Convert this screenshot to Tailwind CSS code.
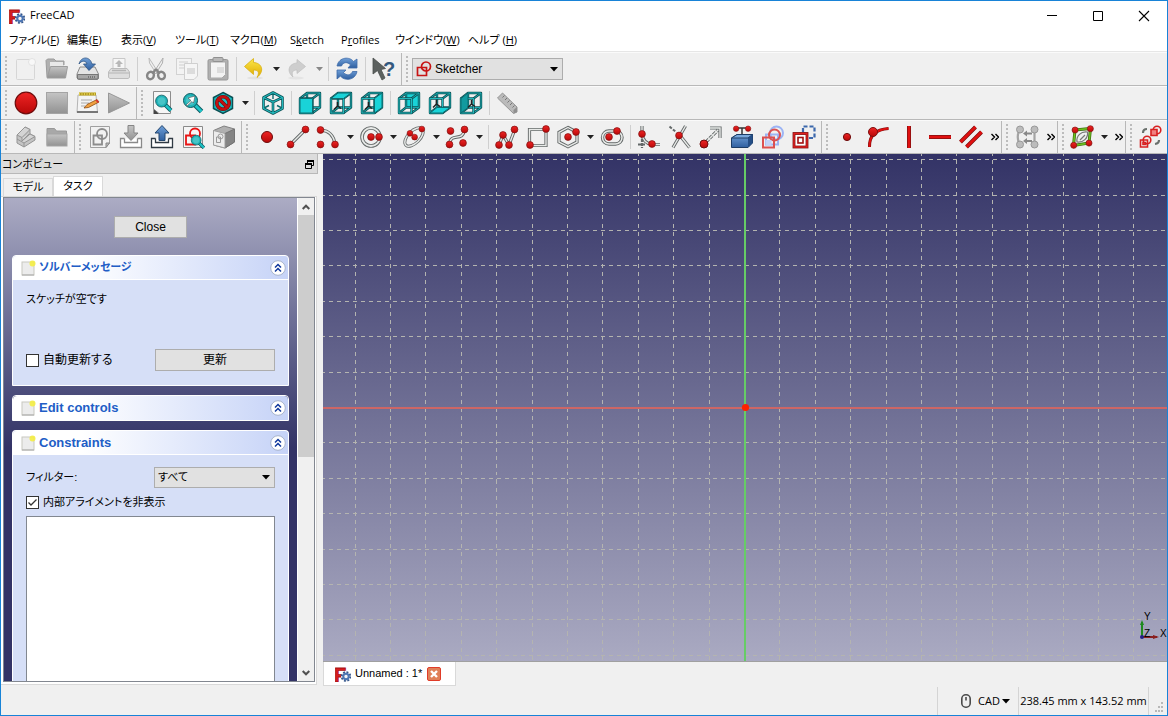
<!DOCTYPE html>
<html lang="ja">
<head>
  <meta charset="UTF-8" />
  <title>FreeCAD</title>
  <meta name="viewport" content="width=device-width, initial-scale=1.0" />
  <script src="https://cdn.jsdelivr.net/npm/@tailwindcss/browser@4"></script>
  <style>
    body {
      font-family: "Liberation Sans", "Noto Sans CJK JP", sans-serif;
      font-feature-settings: "palt";
    }
    .ui {
      font-family: "Open Sans", "Noto Sans CJK JP", sans-serif;
    }
  </style>
</head>
<body class="h-screen flex flex-col overflow-hidden bg-[#f0f0f0] border border-[#1883d7] text-xs text-black">

  <!-- shared icon parts -->
  <svg class="absolute w-0 h-0" aria-hidden="true">
    <defs>
      <linearGradient id="gray" x1="0" y1="0" x2="0" y2="1"><stop offset="0" stop-color="#c4c4c4" /><stop offset="1" stop-color="#929292" /></linearGradient>
      <linearGradient id="blue" x1="0" y1="0" x2="0" y2="1"><stop offset="0" stop-color="#6f9fd8" /><stop offset="1" stop-color="#2f5f9f" /></linearGradient>
      <linearGradient id="yellow" x1="0" y1="0" x2="0" y2="1"><stop offset="0" stop-color="#fbe84a" /><stop offset="1" stop-color="#e0a800" /></linearGradient>
      <linearGradient id="red" x1="0" y1="0" x2="0" y2="1"><stop offset="0" stop-color="#ee2424" /><stop offset="1" stop-color="#b80808" /></linearGradient>
      <linearGradient id="view-bg" x1="0" y1="0" x2="0" y2="1"><stop offset="0" stop-color="#333366" /><stop offset="1" stop-color="#aaaac2" /></linearGradient>
      <circle id="dot" r="3.400" fill="url(#red)" stroke="#7d1010" stroke-width=".7" />
      <path id="frame-back" d="M9 2H22V16.500H9ZM2 7.500L9 2M14.500 7.500L22 2M14.500 22L22 16.500M2 22L9 16.500" fill="none" />
      <path id="frame-front" d="M2 7.500H14.500V22H2Z" fill="none" />
      <g id="frame" stroke-linejoin="round">
        <use href="#frame-back" stroke="#0d5256" stroke-width="2.4" /><use href="#frame-back" stroke="#1aa8ac" />
        <use href="#frame-front" stroke="#0d5256" stroke-width="2.4" /><use href="#frame-front" stroke="#22b8bc" stroke-width="1.100" />
      </g>
      <path id="axes" d="M8.500 11V15L5 18.500M8.500 15L12 17.500" fill="none" stroke="#222" stroke-width="1.500" />
      <g id="logo">
        <text x="-1" y="15.500" font-family="Liberation Sans" font-size="20" font-weight="bold" fill="#d81e1e" stroke="#a81010" stroke-width=".8">F</text>
        <circle cx="11" cy="10.500" r="5" fill="#f0f0f0" />
        <circle cx="11" cy="10.500" r="4.300" fill="none" stroke="#34568c" stroke-width="2" stroke-dasharray="1.800 1.577" />
        <circle cx="11" cy="10.500" r="2.700" fill="#f4f4f4" stroke="#4d76b4" stroke-width="2" />
      </g>
      <g id="page-icon">
        <rect x="1" y="2" width="12" height="13" fill="#ececec" stroke="#c8c8c0" />
        <path d="M1 15H13" stroke="#aaa" />
        <circle cx="11.500" cy="3.500" r="3" fill="#f6ee3a" fill-opacity=".85" />
      </g>
    </defs>
  </svg>

  <header class="ui bg-white text-[11px]">
    <div class="flex items-center h-[29px] pl-2">
      <svg class="w-4 h-4" viewBox="0 0 16 16"><use href="#logo" /></svg>
      <h1 class="ml-[5px]">FreeCAD</h1>
      <div class="ml-auto flex">
        <button aria-label="Minimize" class="w-[46px] h-7 flex items-center justify-center"><svg class="w-3 h-3" viewBox="0 0 12 12"><path d="M1 5.500H11" stroke="#000" /></svg></button>
        <button aria-label="Maximize" class="w-[46px] h-7 flex items-center justify-center"><svg class="w-3 h-3" viewBox="0 0 12 12"><path d="M1.500 1.500H10.500V10.500H1.500Z" fill="none" stroke="#000" /></svg></button>
        <button aria-label="Close window" class="w-[46px] h-7 flex items-center justify-center"><svg class="w-3 h-3" viewBox="0 0 12 12"><path d="M1 1L11 11M11 1L1 11" stroke="#000" stroke-width="1.100" /></svg></button>
      </div>
    </div>
    <nav class="grid grid-cols-[58px_54px_54px_55px_60px_51px_54px_73px_auto] justify-start items-center h-[21px] pl-2 whitespace-nowrap *:text-left">
      <button>ファイル(<u>F</u>)</button>
      <button>編集(<u>E</u>)</button>
      <button>表示(<u>V</u>)</button>
      <button>ツール(<u>T</u>)</button>
      <button>マクロ(<u>M</u>)</button>
      <button>S<u>k</u>etch</button>
      <button>P<u>r</u>ofiles</button>
      <button>ウインドウ(<u>W</u>)</button>
      <button>ヘルプ (<u>H</u>)</button>
    </nav>
  </header>

  <div id="toolbars" class="border-t border-[#e6e6e6]"></div>

  <main class="flex flex-1 min-h-0">
    <aside class="w-[317px] shrink-0 flex flex-col">
      <div class="flex items-center justify-between h-5 bg-[#dcdcdc] border-b border-r border-[#b8b8b8] pl-px pr-[3px] pt-0.5">
        <h2 class="text-[11px]">コンボビュー</h2>
        <button aria-label="Float"><svg class="w-[9px] h-[9px]" viewBox="0 0 9 9"><path d="M2.500 3V1H8.500V5.500H6.500M.500 4H6.500V8.500H.500Z" fill="none" stroke="#000" /><path d="M2 1H9M0 4H7" stroke="#000" stroke-width="2" /></svg></button>
      </div>
      <div class="flex items-end h-[22px] pl-0.5 text-[11px]">
        <button class="w-[50px] h-[18px] leading-none border border-b-0 border-[#d9d9d9]">モデル</button>
        <button class="w-[50px] h-5 leading-none bg-white border border-b-0 border-[#d9d9d9]">タスク</button>
      </div>

      <div class="flex-1 min-h-0 mr-px mb-px border border-l-0 border-[#d9d9d9] bg-white pl-0.5 pr-px pb-[2px] flex">
        <div class="flex-1 flex border border-[#828790] min-h-0">
          <div class="flex-1 flex flex-col px-2 bg-linear-to-b from-[#acacc4] to-[#333366] to-[250px] overflow-hidden">
            <button class="mt-[18px] mb-[17px] self-center w-[73px] h-[22px] leading-none bg-[#e1e1e1] border border-[#adadad]">Close</button>

            <section class="border border-white rounded-t bg-[#d6dff7]">
              <div class="flex items-center h-6 pl-2 pr-0.5 rounded-t bg-linear-to-r from-white from-25% to-[#c6d3f7] border-b border-white">
                <svg class="w-4 h-4" viewBox="0 0 16 16"><use href="#page-icon" /></svg>
                <h3 class="ml-0.5 text-[11px] font-bold text-[#215dc6]">ソルバーメッセージ</h3>
                <button aria-label="Collapse solver messages" class="collapse-btn ml-auto"></button>
              </div>
              <div class="px-[13px] pt-2.5 pb-3.5">
                <p class="h-[18px] text-[11px] leading-[18px]">スケッチが空です</p>
                <div class="flex items-center justify-between mt-[41px]">
                  <label class="flex items-center gap-1 whitespace-nowrap">
                    <input type="checkbox" class="appearance-none w-[13px] h-[13px] bg-white border border-[#333]" />自動更新する
                  </label>
                  <button class="w-[120px] h-[22px] leading-none bg-[#e1e1e1] border border-[#adadad]">更新</button>
                </div>
              </div>
            </section>

            <section class="mt-[9px] border border-white rounded-t">
              <div class="flex items-center h-6 pl-2 pr-0.5 rounded-t bg-linear-to-r from-white from-25% to-[#c6d3f7]">
                <svg class="w-4 h-4" viewBox="0 0 16 16"><use href="#page-icon" /></svg>
                <h3 class="ml-0.5 text-[13px] font-bold text-[#215dc6]">Edit controls</h3>
                <button aria-label="Collapse edit controls" class="collapse-btn ml-auto"></button>
              </div>
            </section>

            <section class="mt-[9px] flex-1 flex flex-col border border-b-0 border-white rounded-t bg-[#d6dff7]">
              <div class="flex items-center h-6 pl-2 pr-0.5 rounded-t bg-linear-to-r from-white from-25% to-[#c6d3f7] border-b border-white">
                <svg class="w-4 h-4" viewBox="0 0 16 16"><use href="#page-icon" /></svg>
                <h3 class="ml-0.5 text-[13px] font-bold text-[#215dc6]">Constraints</h3>
                <button aria-label="Collapse constraints" class="collapse-btn ml-auto"></button>
              </div>
              <div class="flex-1 flex flex-col px-[13px] pt-3 text-[11px]">
                <div class="flex items-center justify-between">
                  <label for="filter">フィルター:</label>
                  <div class="relative">
                    <select id="filter" class="block appearance-none w-[121px] h-[21px] pl-[3px] leading-none bg-[#e1e1e1] border border-[#adadad]"><option>すべて</option></select>
                    <svg class="absolute right-[5px] top-2 w-2 h-[5px] pointer-events-none" viewBox="0 0 8 5"><path d="M0 0H8L4 4.500Z" /></svg>
                  </div>
                </div>
                <label class="relative mt-[5px] flex items-center gap-1 h-[18px] whitespace-nowrap">
                  <input type="checkbox" checked class="appearance-none w-[13px] h-[13px] bg-white border border-[#333]" />内部アライメントを非表示
                  <svg class="absolute left-0 w-[13px] h-[13px] pointer-events-none" viewBox="0 0 13 13"><path d="M2.500 6.500L5 9L10.500 3.500" fill="none" stroke="#333" stroke-width="1.300" /></svg>
                </label>
                <div class="mt-[5px] flex-1 bg-white border border-b-0 border-[#828790]"></div>
              </div>
            </section>
          </div>

          <div class="w-[17px] flex flex-col bg-[#f0f0f0] border-l border-white">
            <button aria-label="Scroll up" class="h-[17px] flex items-center justify-center"><svg class="w-2 h-1.5" viewBox="0 0 8 6"><path d="M.700 5L4 1.700L7.300 5" fill="none" stroke="#505050" stroke-width="2" /></svg></button>
            <div class="flex-1"><div class="h-[54%] bg-[#cdcdcd]"></div></div>
            <button aria-label="Scroll down" class="h-[17px] flex items-center justify-center"><svg class="w-2 h-1.5" viewBox="0 0 8 6"><path d="M.700 1L4 4.300L7.300 1" fill="none" stroke="#505050" stroke-width="2" /></svg></button>
          </div>
        </div>
      </div>
    </aside>

    <section class="flex-1 min-w-0 ml-[5px] flex flex-col">
      <div class="flex-1 min-h-0 relative border-b border-[#a0a0a0]">
        <!-- the sketch plane: origin stays in the centre of the view -->
        <svg class="absolute inset-0 w-full h-full" role="img" aria-label="Sketch view">
          <rect width="100%" height="100%" fill="url(#view-bg)" />
          <svg x="50%" y="50%" overflow="visible">
            <path id="grid" fill="none" stroke="#b4b4b0" stroke-dasharray="4 4" shape-rendering="crispEdges" />
            <path d="M-2000 .500H2000" stroke="#cc6666" stroke-width="2" />
            <path d="M0 -2000V2000" stroke="#66cc66" stroke-width="2" />
            <circle cx=".500" cy="0" r="3.600" fill="#ff2200" />
          </svg>
        </svg>
        <svg class="absolute right-0 bottom-3.5 w-7 h-9" viewBox="0 0 28 36">
          <path d="M3 26V11" stroke="#1f8a1f" stroke-width="2" /><path d="M1 14L3 9L5 14Z" fill="#1f8a1f" />
          <path d="M3 26H18" stroke="#8a1f1f" stroke-width="2" /><path d="M14 24L20 26L14 28Z" fill="#8a1f1f" />
          <circle cx="3" cy="26" r="2" fill="#222288" />
          <g font-family="Liberation Sans" font-size="10"><text x="5" y="9">Y</text><text x="5" y="26">Z</text><text x="21" y="26">X</text></g>
        </svg>
      </div>
      <div class="flex h-6">
        <div class="flex items-center w-[133px] pl-[11px] bg-white border border-t-0 border-[#d9d9d9] text-[11px] whitespace-nowrap">
          <svg class="w-4 h-4" viewBox="0 0 16 16"><use href="#logo" /></svg>
          <span class="ml-1">Unnamed : 1*</span>
          <button aria-label="Close tab" class="ml-[5px]"><svg class="w-3.5 h-3.5" viewBox="0 0 14 14"><rect x=".500" y=".500" width="13" height="13" rx="1.500" fill="#e08058" stroke="#e03c28" /><path d="M4 4L10 10M10 4L4 10" stroke="#fff" stroke-width="2.400" /></svg></button>
        </div>
      </div>
    </section>
  </main>

  <footer class="ui flex justify-end items-end h-[29px] pr-[18px] text-[11px] whitespace-nowrap">
    <div class="flex items-center h-7 w-[81px] pl-[22px] border-l border-[#d4d4d4]">
      <svg class="w-3 h-4" viewBox="0 0 12 16"><rect x="1.800" y="1.800" width="8.400" height="12.400" rx="4" fill="none" stroke="#4a4a4a" stroke-width="1.600" /><path d="M6 4V7.500" stroke="#4a4a4a" stroke-width="1.600" /></svg>
      <button class="ml-1.5 flex items-center">CAD<svg class="ml-0.5 w-2 h-[5px]" viewBox="0 0 8 5"><path d="M0 0H8L4 4.500Z" /></svg></button>
    </div>
    <div class="flex items-center justify-center h-7 w-[131px] border-x border-[#d4d4d4]">238.45 mm x 143.52 mm</div>
  </footer>
  <svg class="absolute right-1 bottom-1 w-2.5 h-2.5" viewBox="0 0 10 10" aria-hidden="true"><path d="M7 1H9M4 5H6M7 5H9M1 9H3M4 9H6M7 9H9" stroke="#b8b8b8" stroke-width="2" /></svg>

  <script>
    // grey tube used by the geometry icons: dark outline with a light core
    const tube = (d) =>
      `<path d="${d}" fill="none" stroke="#636868" stroke-width="3.2"/><path d="${d}" fill="none" stroke="#e8eae8" stroke-width="1.4"/>`;
    const dot = (x, y) => `<use href="#dot" x="${x}" y="${y}"/>`;
    const bar = (d) =>
      `<path d="${d}" fill="none" stroke="#7d1010" stroke-width="4"/><path d="${d}" fill="none" stroke="#e01010" stroke-width="2.6"/>`;
    const face = (d, color = "#19d3d8") => `<path d="${d}" fill="${color}" stroke="#0d6c70" stroke-linejoin="round"/>`;
    const frame = `<use href="#frame"/>`;
    const lens = `<path d="M13 13L20.500 20.500" stroke="#0b5a60" stroke-width="5"/><path d="M13 13L20.500 20.500" stroke="#1cc4c8" stroke-width="3"/><circle cx="9.500" cy="9.500" r="7" fill="#20b4b8" stroke="#0b5a60"/><circle cx="9.500" cy="9.500" r="4.500" fill="#6fd4d6" fill-opacity=".5"/>`;
    const tray = (c) => `<path d="M5.500 13.500H1.500V22.500H22.500V13.500H18.500M5.500 13.500V17.500H18.500V13.500" fill="#fff" stroke="${c}" stroke-width="1.300"/>`;
    const hexagon = "M12 1.500L21.500 6.500V17.500L12 22.500L2.500 17.500V6.500Z";

    const icons = {
      "New": `<rect x="2.500" y="2.500" width="18" height="20" rx="1" fill="#f0f0f0" stroke="#d6d6d6"/><circle cx="18" cy="5" r="3.500" fill="#f8f8f8" stroke="#e2e2e2"/>`,
      "Open": `<path d="M2 20L1 3.500L2.500 2H9L11 4H19V8" fill="#b0b0b0" stroke="#9c9c9c"/><path d="M5 5H18V12H5Z" fill="#e8e8e8"/><path d="M2 21L5.500 9.500H22.500L20.500 21Z" fill="url(#gray)" stroke="#9c9c9c"/>`,
      "Save": `<path d="M4 10H19L22.500 17V21.500L21 22.500H2.500L1 21V17Z" fill="#e4e4e4" stroke="#8a8a8a"/><path d="M1.500 17.500H22V22H1.500Z" fill="#a8a8a8" stroke="#777"/><path d="M12 20H20" stroke="#777" stroke-width="2" stroke-dasharray="1 1"/><path d="M3 7C5 -1 14 -1 16 7H19.500L13 13.500L7.500 7H11C10 3.500 6 3 3 7Z" fill="url(#blue)" stroke="#2c5282" stroke-width=".800"/>`,
      "Print": `<path d="M6 12V1.500H18V12" fill="#f6f6f6" stroke="#c8c8c8"/><path d="M12 3L16 7H13.500V10H10.500V7H8Z" fill="#b8b8b8"/><path d="M4 11.500H20L22.500 15V20.500L21 21.500H3L1.500 20.500V15Z" fill="#dedede" stroke="#bcbcbc"/><path d="M2 16H22" stroke="#b4b4b4"/><path d="M5 13.500H19" stroke="#b4b4b4" stroke-width="1.500"/>`,
      "Cut": `<path d="M5 1L14 15L12.500 17L5.500 6Z" fill="#eee" stroke="#bcbcbc"/><path d="M19 1L10 15L11.500 17L18.500 6Z" fill="#eee" stroke="#b0b0b0"/><g fill="none" stroke="#868686" stroke-width="2.400"><path d="M12 12L9 16M12 12L15 16"/><ellipse cx="6.500" cy="18.500" rx="3.300" ry="3.800" transform="rotate(25 6.500 18.500)"/><ellipse cx="17.500" cy="18.500" rx="3.300" ry="3.800" transform="rotate(-25 17.500 18.500)"/></g>`,
      "Copy": `<rect x="1.500" y="1.500" width="15" height="16" fill="#f3f3f3" stroke="#d2d2d2"/><path d="M4 5H13M4 8H13M4 11H13" stroke="#dcdcdc" stroke-width="1.500"/><path d="M9.500 6.500H22.500V19L19 22.500H9.500Z" fill="#f5f5f5" stroke="#cfcfcf"/><path d="M12 11H20V17H12Z" fill="#dcdcdc"/>`,
      "Paste": `<rect x="2" y="2.500" width="20" height="20.500" rx="1.500" fill="#b0b0b0" stroke="#989898"/><path d="M4.500 5H19.500V17.500L16 21H4.500Z" fill="#f3f3f3" stroke="#aaa"/><rect x="7" y=".500" width="10" height="4" rx="1" fill="#b8b8b8" stroke="#909090"/><path d="M11 10H18V16H11Z" fill="#dcdcdc"/>`,
      "Undo": `<ellipse cx="13" cy="21" rx="8" ry="1.500" fill="#e2e2e2"/><path d="M2.500 9.500L11.500 1.500V5.500C20 6 23 14 15 20.500C18 15 16 13 11.500 13V17.500Z" fill="url(#yellow)" stroke="#d8b010" stroke-width=".800"/>`,
      "Redo": `<ellipse cx="11" cy="21" rx="8" ry="1.500" fill="#e4e4e4"/><path d="M20.500 9.500L12 2.500V6C4 6.500 1 14 8 20C6 15 8 13 12 13V16.500Z" fill="#cecece" stroke="#c2c2c2" stroke-width=".800"/>`,
      "Refresh": `<g fill="url(#blue)" stroke="#3c6aa8" stroke-width=".800"><path d="M2 9C4 -.500 15 -.500 18.500 4.500L22 2V11H13L15.500 8C12.500 4.500 8 5 6.500 9Z"/><path d="M22 14.500C20 24 9 24 5.500 19L2 22V13H11L8.500 15.500C11.500 19 16 18.500 17.500 14.500Z"/></g>`,
      "What's This?": `<text x="11" y="19" font-family="Liberation Sans" font-size="20" font-weight="bold" fill="#34597f">?</text><path d="M1 1V17L5.500 13.500L10 23L13 21L9 12.500L13.500 11.500Z" fill="#5c615f" stroke="#4a4e4c" stroke-width=".800"/>`,
      "Record macro": `<circle cx="12" cy="12" r="10.800" fill="url(#red)" stroke="#6e0c0c" stroke-width="1.200"/>`,
      "Stop macro": `<rect x="1.500" y="1.500" width="21" height="21" fill="url(#gray)" stroke="#a4a4a4"/>`,
      "Macros": `<path d="M2 4H20L21.500 21.500H1Z" fill="#f4f4f4" stroke="#b4b4b4"/><path d="M1 21H22" stroke="#777" stroke-width="2"/><path d="M3 3H20" stroke="#b49c20" stroke-width="3"/><path d="M3 3H20" stroke="#e0cc50" stroke-width="3" stroke-dasharray="1 1.500"/><path d="M5 9H16M5 12H13M5 15H9" stroke="#aaa"/><path d="M8 17L11 13.500L21 8.500L23 11L12.500 16.500Z" fill="#f0a040" stroke="#8a4a10" stroke-width=".800"/><path d="M19.500 9.300L21 8.500L23 11L21.500 12Z" fill="#d83030"/>`,
      "Play macro": `<path d="M1.500 2L22.500 12L1.500 22Z" fill="url(#gray)" stroke="#989898"/>`,
      "Fit all": `<path d="M3.500 .500H20.500V22.500H9L3.500 18Z" fill="#f6f6f6" stroke="#8c8c8c"/><path d="M3.500 18V23H9Z" fill="#444"/><g transform="translate(3.500 2) scale(.85)">${lens}</g>`,
      "Fit selection": `${lens}<path d="M5 14L10 9.500L7 7L14 5L12.500 12L11 10.500L6 15Z" fill="#fff" stroke="#333" stroke-width=".500"/>`,
      "Draw style": `<path d="${hexagon}" fill="#19c0c4" stroke="#0b5054" stroke-width="1.500"/><circle cx="12" cy="12" r="6.200" fill="none" stroke="#6e0c0c" stroke-width="3.600"/><path d="M8 8L16 16" stroke="#6e0c0c" stroke-width="3.600"/><circle cx="12" cy="12" r="6.200" fill="none" stroke="#c41010" stroke-width="2.400"/><path d="M7.500 7.500L16.500 16.500" stroke="#c41010" stroke-width="2.400"/>`,
      "Isometric": `<g fill="none" stroke-linejoin="round"><path d="${hexagon}M2.500 6.500L12 11L21.500 6.500M12 11V22.500" stroke="#0d5256" stroke-width="2.600"/><path d="M12 2V8M3 17L8 14.500M21 17L16 14.500" stroke="#0d6c70" stroke-width="1.400"/><path d="${hexagon}M2.500 6.500L12 11L21.500 6.500M12 11V22.500" stroke="#22b8bc" stroke-width="1.200"/></g>`,
      "Front": frame + face("M2 7.500H14.500V22H2Z"),
      "Top": frame + face("M2 7.500L9 2H22L14.500 7.500Z") + `<use href="#axes"/>`,
      "Right": frame + face("M14.500 7.500L22 2V16.500L14.500 22Z") + `<use href="#axes"/>`,
      "Rear": face("M9 2H22V16.500H9Z") + frame,
      "Bottom": frame + face("M2 22L9 16.500H22L14.500 22Z") + `<use href="#axes" y="-2"/>`,
      "Left": frame + face("M2 7.500L9 2V16.500L2 22Z", "#119a9f") + `<use href="#axes" x="4" y="-2"/>`,
      "Measure": `<path d="M6.500 2L21 16V21L17.500 22.500L1.500 7Z" fill="#bababa" stroke="#969696"/><path d="M8.500 4.500L6.500 6.500M11 7L9 9M13.500 9.500L11.500 11.500M16 12L14 14M18.500 14.500L16.500 16.500" stroke="#777"/><path d="M21 16V21L17.500 22.500V19Z" fill="#909090"/>`,
      "Part": `<g fill="#d4d4d4" stroke="#949494" stroke-linejoin="round"><path d="M3 10L11 2L16 4.500V9L21 11.500V15L10 22L3 18Z" fill="#c4c4c4"/><path d="M3 10L8 12.500L16 4.500L11 2ZM8 12.500V16L15 9M3 14L10 18L21 11.500L16 9L8 16M10 18V22"/></g>`,
      "Group": `<path d="M2 3.500H9.500L11.500 6H21.500V20.500H2Z" fill="#a8a8a8" stroke="#989898"/><rect x="2" y="9" width="20" height="12" fill="url(#gray)" stroke="#a4a4a4"/>`,
      "New sketch": `<path d="M2.500 1.500H21.500V18L18 22.500H2.500Z" fill="#f2f2f2" stroke="#a0a0a0"/><circle cx="14" cy="9" r="5" fill="none" stroke="#8c8c8c" stroke-width="1.800"/><path d="M5.500 10.500H14V19.500H5.500Z" fill="none" stroke="#8c8c8c" stroke-width="1.800"/><path d="M21.500 18H18V22.500Z" fill="#bbb" stroke="#888"/>`,
      "Edit sketch": tray("#8a8a8a") + `<path d="M9 .500H15V8H19L12 15.500L5 8H9Z" fill="url(#gray)" stroke="#858585"/>`,
      "Leave sketch": tray("#303a44") + `<path d="M9 15.500V8H5L12 .500L19 8H15V15.500Z" fill="url(#blue)" stroke="#24476f"/>`,
      "View sketch": `<path d="M2.500 1.500H21.500V22.500H2.500Z" fill="#f6f6f6" stroke="#8a8a8a"/><circle cx="14" cy="8.500" r="5" fill="none" stroke="#e81414" stroke-width="1.800"/><path d="M5 10.500H14V19.500H5Z" fill="none" stroke="#e81414" stroke-width="1.800"/><g transform="translate(8.500 8.500) scale(.7)">${lens}</g>`,
      "Map sketch": `<path d="M1.500 5.500L12 1L22.500 4V17L13 23L1.500 20Z" fill="#b0b0b0" stroke="#808080"/><path d="M13 8.500L22.500 4V17L13 23Z" fill="#848484" stroke="#747474"/><path d="M1.500 5.500L13 8.500V23L1.500 20Z" fill="#ececec" stroke="#a0a0a0"/><circle cx="8.500" cy="11.500" r="2.500" fill="none" stroke="#999"/><path d="M4.500 12H8.500V17.500H4.500Z" fill="none" stroke="#999"/>`,
      "Point": `<circle cx="12" cy="12" r="5.500" fill="url(#red)" stroke="#6e0c0c"/>`,
      "Line": tube("M4 20L19 5") + dot(4.500, 19.500) + dot(19.500, 4.500),
      "Arc": tube("M5 5Q17 6 19 19") + dot(4.500, 5) + dot(4.500, 19.500) + dot(19, 19.500),
      "Circle": `<circle cx="12" cy="12" r="9" fill="none" stroke="#636868" stroke-width="3.600"/><circle cx="12" cy="12" r="9" fill="none" stroke="#e8eae8" stroke-width="1.800"/>` + dot(12, 12) + dot(20, 12),
      "Ellipse": `<g transform="rotate(-45 12 12)"><ellipse cx="12" cy="12" rx="11.500" ry="6" fill="none" stroke="#636868" stroke-width="3"/><ellipse cx="12" cy="12" rx="11.500" ry="6" fill="none" stroke="#e8eae8" stroke-width="1.400"/></g><g transform="translate(2 1.500) scale(.85)">${dot(12.500, 12.500)}${dot(7, 8)}${dot(21, 3)}</g>`,
      "B-spline": tube("M4 20C6 6 17 18 19.500 5") + dot(5.500, 6) + dot(19.500, 4.500) + dot(4.500, 19.500) + dot(18, 18),
      "Polyline": tube("M4 20L8 10L14 20L20 4") + dot(4, 20) + dot(8, 10) + dot(14, 20) + dot(19.500, 4.500),
      "Rectangle": tube("M3.500 4.500H20V20.500H3.500Z") + dot(4, 20) + dot(20, 4),
      "Polygon": tube("M12 2.500L21 7.300V17L12 21.700L3 17V7.300Z") + dot(12, 12) + dot(20, 7),
      "Slot": `<rect x="2.500" y="6" width="19.500" height="13" rx="6.500" fill="none" stroke="#636868" stroke-width="3.400"/><rect x="2.500" y="6" width="19.500" height="13" rx="6.500" fill="none" stroke="#e8eae8" stroke-width="1.500"/>` + dot(9, 12) + dot(17, 6),
      "Fillet": tube("M5 1V9Q6 18 15 19.500H23") + `<path d="M5 14V23M1 19.500H9" stroke="#636868" stroke-width="2.200" stroke-dasharray="3 1"/>` + dot(5, 9) + dot(15, 19),
      "Trim": tube("M17.500 1L5 22.500M10 8L21.500 22.500") + `<path d="M1.500 1.500L8 7" stroke="#636868" stroke-width="2" stroke-dasharray="3 1.500"/>` + dot(11, 10.500),
      "External geometry": tube("M11 3H21V13") + `<path d="M7 17L19 5" stroke="#636868" stroke-width="3.200" stroke-dasharray="4 1"/><path d="M7 17L19 5" stroke="#e8eae8" stroke-width="1.400"/><circle cx="5" cy="19" r="4" fill="url(#red)" stroke="#6e0c0c"/>`,
      "Carbon copy": `<path d="M12 3V10M6 3H18" stroke="#333" stroke-width="1.500"/><g transform="translate(2.500 .5) scale(.8)">${dot(4.500, 4)}${dot(19.500, 4)}</g><path d="M1.500 13L7 9.500H22.500V18L18 22.500H1.500Z" fill="url(#blue)" stroke="#1d3d66"/><path d="M1.500 13L7 9.500H22.500L18 13Z" fill="#79a8dc" stroke="#1d3d66"/><path d="M18 13V22.500L22.500 18V9.500Z" fill="#244e86"/>`,
      "Construction mode": `<g fill="none" stroke-width="2"><circle cx="15.500" cy="8" r="6.500" stroke="#9cb4f4"/><path d="M5 9.500H17V19.500H5Z" stroke="#9cb4f4"/><circle cx="13.500" cy="10" r="5.500" stroke="#dc5050"/><path d="M2 12.500H13V22.500H2Z" stroke="#dc5050"/></g><path d="M4.500 15H10.500V20H4.500Z" fill="#c4d2f6"/>`,
      "Move geometry": `<path d="M11 7V1.500H22.500V13H17" fill="none" stroke="#3c68ac" stroke-width="2.200" stroke-dasharray="4 2"/><rect x="2" y="8.500" width="13" height="13.500" fill="#fff" stroke="#7d1010" stroke-width="2.800"/><rect x="2" y="8.500" width="13" height="13.500" fill="none" stroke="#e02020" stroke-width="1.400"/><rect x="6" y="12.500" width="5" height="5.500" fill="#fff" stroke="#a01010" stroke-width="1.600"/>`,
      "Coincident": `<circle cx="12" cy="12" r="3.600" fill="url(#red)" stroke="#6e0c0c"/>`,
      "Point on object": `<path d="M3.500 22Q3 5 22.500 3.500" fill="none" stroke="#7d1010" stroke-width="3"/><path d="M3.500 22Q3 5 22.500 3.500" fill="none" stroke="#e01010" stroke-width="1.800"/><circle cx="7" cy="7" r="4.500" fill="url(#red)" stroke="#7d1010"/>`,
      "Vertical": bar("M12 1V23"),
      "Horizontal": bar("M1 12H23"),
      "Parallel": bar("M1.500 17L16.500 2M7.500 22L22.500 7"),
      "Connect edges": `<g stroke="#a4a4a4" stroke-width="2.200" fill="none"><path d="M4.500 5Q1 12 4.500 19M19.500 5V19"/></g><path d="M8 8.500L12 5.500V7.500H17V9.500H12V11.500ZM8 16L12 13V15H17V17H12V19Z" fill="#888"/><g fill="#bcbcbc" stroke="#989898"><circle cx="5" cy="4.500" r="3.500"/><circle cx="19.500" cy="4.500" r="3.500"/><circle cx="5" cy="19.500" r="3.500"/><circle cx="19.500" cy="19.500" r="3.500"/></g>`,
      "B-spline tools": `<path d="M5 5L20.500 3.500L19 18L3.500 20.500Z" fill="#f0f0f0" stroke="#3c6c10" stroke-width="3"/><path d="M5 5L20.500 3.500L19 18L3.500 20.500Z" fill="none" stroke="#6cc020" stroke-width="1.600"/><path d="M7 17C6 11 11 6 17.500 7C18.500 13 13 18 7 17ZM10 15L15 10" fill="none" stroke="#777" stroke-width="1.200"/><g transform="translate(1 1) scale(.9)">${dot(4.500, 4.500)}${dot(21.500, 3)}${dot(20, 19)}${dot(3, 21.500)}</g>`,
      "Switch virtual space": `<g fill="none" stroke="#d82020" stroke-width="1.600"><circle cx="18" cy="5" r="3.800"/><path d="M12 4.500H18V10.500H12Z" fill="#f08080"/><circle cx="8" cy="15" r="3.800"/><path d="M1.500 15H8.500V22H1.500Z"/><path d="M4 17.500H6.500V19.500H4Z"/></g><path d="M4 8Q4 4 8 4M20 15Q20 18.500 16 19" fill="none" stroke="#6a706c" stroke-width="2.200"/>`,
    };

    // "|" is a separator, "»" an overflow button, a trailing "+" adds a menu arrow
    const rows = [
      [
        ["New", "Open", "Save", "Print", "|", "Cut", "Copy", "Paste", "|", "Undo+", "Redo+", "|", "Refresh", "|", "What's This?"],
        ["workbench"],
      ],
      [
        ["Record macro", "Stop macro", "Macros", "Play macro"],
        ["Fit all", "Fit selection", "Draw style+", "|", "Isometric", "|", "Front", "Top", "Right", "|", "Rear", "Bottom", "Left", "|", "Measure"],
      ],
      [
        ["Part", "Group"],
        ["New sketch", "Edit sketch", "Leave sketch", "View sketch", "Map sketch"],
        ["Point", "Line", "Arc+", "Circle+", "Ellipse+", "B-spline+", "|", "Polyline", "Rectangle", "Polygon+", "Slot", "|", "Fillet", "Trim", "External geometry", "Carbon copy", "Construction mode", "Move geometry"],
        ["Coincident", "Point on object", "Vertical", "Horizontal", "Parallel", "»"],
        ["Connect edges", "»"],
        ["B-spline tools+", "»"],
        ["Switch virtual space"],
      ],
    ];

    const workbench = `
      <div class="relative ml-px">
        <svg class="absolute left-1 top-[3px] w-4 h-4 pointer-events-none" viewBox="0 0 16 16"><circle cx="10" cy="5.500" r="4.500" fill="none" stroke="#c81414" stroke-width="1.700"/><path d="M1.500 6.500H10.500V14.500H1.500Z" fill="none" stroke="#c81414" stroke-width="1.700"/></svg>
        <select aria-label="Workbench" class="block appearance-none w-[151px] h-[22px] pl-[22px] leading-none bg-[#e1e1e1] border border-[#adadad]"><option>Sketcher</option></select>
        <svg class="absolute right-[5px] top-[9px] w-2 h-[5px] pointer-events-none" viewBox="0 0 8 5"><path d="M0 0H8L4 4.500Z"/></svg>
      </div>`;

    function item(name) {
      if (name === "|") return `<span class="w-1.5 h-6 flex justify-center"><span class="w-px bg-[#cfcfcf]"></span></span>`;
      if (name === "»") return `<button aria-label="More" class="w-[13px] h-6 flex items-center justify-end"><svg class="w-2 h-2" viewBox="0 0 8 8"><path d="M.500 1L3.500 4L.500 7M4.500 1L7.500 4L4.500 7" fill="none" stroke="#000" stroke-width="1.400"/></svg></button>`;
      if (name === "workbench") return workbench;
      const menu = name.endsWith("+");
      const label = menu ? name.slice(0, -1) : name;
      const svg = `<svg class="w-6 h-6" viewBox="0 0 24 24">${icons[label]}</svg>`;
      return menu
        ? `<button aria-label="${label}" class="w-[43px] h-8 pl-[3px] flex items-center gap-[7px]">${svg}<svg class="w-[7px] h-1" viewBox="0 0 7 4"><path d="M0 0H7L3.500 4Z" fill="${label === "Redo" ? "#888" : "#222"}"/></svg></button>`
        : `<button aria-label="${label}" class="w-[31px] h-8 flex items-center justify-center">${svg}</button>`;
    }

    const grip = `<svg class="w-[9px] h-7" viewBox="0 0 9 28"><path d="M5 1V28" stroke="#bcbcbc" stroke-width="2" stroke-dasharray="2 2"/></svg>`;

    document.getElementById("toolbars").innerHTML = rows
      .map((row) => {
        const bars = row
          .map((names, i) => {
            const edge = i < row.length - 1 ? "border-r border-[#b8b8b8]" : "flex-1";
            return `<div role="toolbar" class="flex items-center pr-0.5 ${edge}">${grip}${names.map(item).join("")}</div>`;
          })
          .join("");
        return `<div class="flex h-[34px] border-t border-t-[#fafafa] border-b border-b-[#b8b8b8]">${bars}</div>`;
      })
      .join("");

    document.querySelectorAll(".collapse-btn").forEach((btn) => {
      btn.innerHTML = `<svg class="w-4 h-4" viewBox="0 0 16 16"><circle cx="8" cy="8" r="7.300" fill="#fff" stroke="#a8b4cc"/><path d="M5 7.500L8 4.500L11 7.500M5 11.500L8 8.500L11 11.500" fill="none" stroke="#10389c" stroke-width="1.500"/></svg>`;
    });

    // grid lines every 35.4 units on both sides of the origin
    let d = "";
    for (let i = -40; i <= 40; i++) {
      if (i === 0) continue;
      const p = Math.round(i * 35.4) - 0.5;
      d += `M${p} -1200V1200M-1600 ${p}H1600`;
    }
    document.getElementById("grid").setAttribute("d", d);
  </script>
</body>
</html>
